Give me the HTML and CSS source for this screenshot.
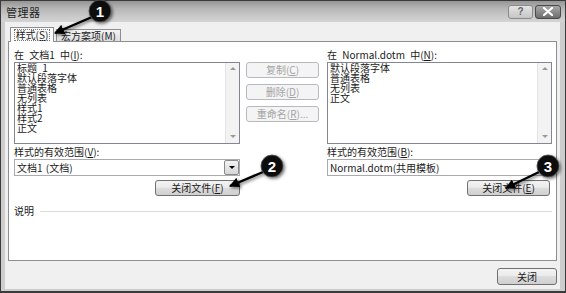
FILE: index.html
```html
<!DOCTYPE html>
<html lang="zh">
<head>
<meta charset="utf-8">
<title>管理器</title>
<link rel="stylesheet" href="styles.css">
</head>
<body>
<div class="window">
  <div class="titlebar">
    <span class="title">管理器</span>
    <div class="controls">
      <div class="ctl help">?</div>
      <div class="ctl close">
        <svg width="12" height="9" viewBox="0 0 12 9"><path d="M2 1 L10 8 M10 1 L2 8" stroke="#fff" stroke-width="2.2" stroke-linecap="round"/></svg>
      </div>
    </div>
  </div>
  <div class="client">
    <div class="tabs">
      <div class="tab active"><span class="focus">样式(<u>S</u>)</span></div>
      <div class="tab">宏方案项(<u>M</u>)</div>
    </div>
    <div class="panel">
      <div class="cols">
        <div class="col col-left">
          <div class="label">在 文档1 中(<u>I</u>):</div>
          <div class="listbox">
            <div class="items">
              <div>标题 1</div>
              <div>默认段落字体</div>
              <div>普通表格</div>
              <div>无列表</div>
              <div>样式1</div>
              <div>样式2</div>
              <div>正文</div>
            </div>
            <div class="scroll">
              <span class="arr up"></span>
              <span class="arr down"></span>
            </div>
          </div>
          <div class="label label2">样式的有效范围(<u>V</u>):</div>
          <div class="combo">
            <span class="combo-text">文档1 (文档)</span>
            <span class="drop"><span class="tri"></span></span>
          </div>
          <div class="btn close-file">关闭文件(<u>F</u>)</div>
        </div>
        <div class="col col-mid">
          <div class="btn disabled">复制(<u>C</u>)</div>
          <div class="btn disabled">删除(<u>D</u>)</div>
          <div class="btn disabled">重命名(<u>R</u>)...</div>
        </div>
        <div class="col col-right">
          <div class="label">在 Normal.dotm 中(<u>N</u>):</div>
          <div class="listbox">
            <div class="items">
              <div>默认段落字体</div>
              <div>普通表格</div>
              <div>无列表</div>
              <div>正文</div>
            </div>
            <div class="scroll">
              <span class="arr up"></span>
              <span class="arr down"></span>
            </div>
          </div>
          <div class="label label2">样式的有效范围(<u>B</u>):</div>
          <div class="combo">
            <span class="combo-text">Normal.dotm(共用模板)</span>
          </div>
          <div class="btn close-file right">关闭文件(<u>E</u>)</div>
        </div>
      </div>
      <div class="desc">
        <span class="desc-label">说明</span>
        <span class="rule"></span>
      </div>
    </div>
    <div class="footer">
      <div class="btn close-btn">关闭</div>
    </div>
  </div>
</div>
<svg class="callouts" width="566" height="293" viewBox="0 0 566 293">
  <defs>
    <filter id="ds" x="-50%" y="-50%" width="200%" height="200%">
      <feDropShadow dx="1.5" dy="1.5" stdDeviation="1.6" flood-color="#000" flood-opacity="0.55"/>
    </filter>
    <marker id="ah" viewBox="0 0 10 10" refX="9" refY="5" markerWidth="10" markerHeight="10" markerUnits="userSpaceOnUse" orient="auto">
      <path d="M0 0 L10 5 L0 10 Z" fill="#000"/>
    </marker>
  </defs>
  <g filter="url(#ds)">
    <line x1="92" y1="17" x2="55" y2="33" stroke="#000" stroke-width="2.4" marker-end="url(#ah)"/>
    <circle cx="100" cy="11" r="11" fill="#111" stroke="#555" stroke-width="0.8"/>
    <line x1="263" y1="172" x2="230" y2="186" stroke="#000" stroke-width="2.4" marker-end="url(#ah)"/>
    <circle cx="272" cy="166" r="11" fill="#111" stroke="#555" stroke-width="0.8"/>
    <line x1="539" y1="172" x2="506" y2="188" stroke="#000" stroke-width="2.4" marker-end="url(#ah)"/>
    <circle cx="548" cy="166" r="11" fill="#111" stroke="#555" stroke-width="0.8"/>
  </g>
  <text x="100" y="16.5" class="num">1</text>
  <text x="272" y="171.5" class="num">2</text>
  <text x="548" y="171.5" class="num">3</text>
</svg>
</body>
</html>
```

FILE: styles.css
```css
* { box-sizing: border-box; }
html, body { margin: 0; padding: 0; }
body {
  position: relative;
  width: 566px;
  height: 293px;
  overflow: hidden;
  background: #fff;
  font-family: "Noto Sans CJK SC", "Noto Sans", sans-serif;
  font-size: 10px;
  color: #1a1a1a;
  word-spacing: 3px;
}
u { text-decoration: underline; text-underline-offset: 1px; }

.window {
  width: 566px;
  height: 293px;
  border: 1px solid #3a3a3a;
  border-bottom-width: 2px;
  background: #cdcdcd;
  display: flex;
  flex-direction: column;
}
.titlebar {
  flex: none;
  height: 21px;
  display: flex;
  align-items: center;
  justify-content: space-between;
  padding: 0 4px 0 5px;
  background: linear-gradient(to bottom, #959595 0%, #b6b6b6 35%, #cacaca 75%, #d4d4d4 100%);
}
.title { font-size: 11px; color: #1e1e1e; letter-spacing: 0.5px; }
.controls { display: flex; gap: 2px; }
.ctl {
  height: 14px;
  border-radius: 3px;
  display: flex;
  align-items: center;
  justify-content: center;
}
.help {
  width: 25px;
  border: 1px solid #8a8a8a;
  background: linear-gradient(#e4e4e4, #c6c6c6);
  color: #666;
  font-family: "Liberation Sans", sans-serif;
  font-weight: bold;
  font-size: 10px;
}
.close {
  width: 26px;
  border: 1px solid #4a4a4a;
  background: linear-gradient(#a8a8a8, #6e6e6e);
}

.client {
  flex: 1;
  margin: 0 5px 2px 4px;
  padding: 5px 3px 0 3px;
  background: #f0f0f0;
  display: flex;
  flex-direction: column;
}
.tabs { display: flex; align-items: flex-end; margin-left: 2px; height: 14px; }
.tab {
  height: 12px;
  width: 65px;
  margin-left: 2px;
  border: 1px solid #8c8e94;
  border-bottom: none;
  background: linear-gradient(#f4f4f4, #dcdcdc);
  display: flex;
  align-items: center;
  justify-content: center;
  line-height: 10px;
  color: #222;
}
.tab.active {
  width: 44px;
  height: 15px;
  margin-left: 0;
  margin-bottom: -1px;
  background: #fbfbfb;
  position: relative;
  z-index: 1;
}
.focus { outline: 1px dotted #777; outline-offset: 0; padding: 0 1px; line-height: 10px; }

.panel {
  flex: none;
  height: 220px;
  border: 1px solid #8c8e94;
  background: #fff;
  padding: 7px 4px 0 5px;
}
.cols { display: flex; }
.col { display: flex; flex-direction: column; }
.col-left { width: 226px; }
.col-mid { width: 73px; margin: 0 8px 0 6px; padding-top: 13px; gap: 6px; }
.col-right { width: 225px; }
.label { height: 12px; line-height: 12px; white-space: nowrap; }
.label2 { margin-top: 2px; }

.listbox {
  margin-top: 1px;
  height: 82px;
  border: 1px solid #828790;
  display: flex;
  background: #fff;
}
.items { flex: 1; padding: 0 2px; line-height: 10px; }
.items div { height: 10px; white-space: nowrap; }
.scroll {
  width: 14px;
  background: #f3f3f3;
  border-left: 1px solid #e4e4e4;
  display: flex;
  flex-direction: column;
  justify-content: space-between;
  align-items: center;
  padding: 4px 0 5px;
}
.arr { width: 0; height: 0; border-left: 3px solid transparent; border-right: 3px solid transparent; }
.arr.up { border-bottom: 3px solid #9a9a9a; }
.arr.down { border-top: 3px solid #9a9a9a; }

.combo {
  margin-top: 1px;
  height: 17px;
  border: 1px solid #a9abb0;
  background: #fff;
  display: flex;
  align-items: center;
}
.combo-text { flex: 1; padding-left: 2px; white-space: nowrap; word-spacing: 1px; }
.drop {
  width: 15px;
  height: 15px;
  border: 1px solid #8a8a8a;
  border-radius: 2px;
  background: linear-gradient(#f3f3f3, #d6d6d6);
  display: flex;
  align-items: center;
  justify-content: center;
}
.tri { width: 0; height: 0; border-left: 3px solid transparent; border-right: 3px solid transparent; border-top: 3px solid #000; }

.btn {
  height: 16px;
  border: 1px solid #707070;
  border-radius: 3px;
  background: linear-gradient(#f3f3f3 0%, #ebebeb 45%, #dddddd 50%, #cfcfcf 100%);
  display: flex;
  align-items: center;
  justify-content: center;
  white-space: nowrap;
  color: #1a1a1a;
  line-height: 10px;
}
.btn.disabled {
  border-color: #b6b9bd;
  background: #f4f4f4;
  color: #a4a4a4;
}
.close-file { margin-top: 4px; width: 85px; align-self: flex-end; }
.close-file.right { width: 83px; margin-right: 2px; }

.desc { margin-top: 9px; display: flex; align-items: center; height: 12px; }
.desc-label { line-height: 12px; }
.rule { flex: 1; height: 1px; background: #dcdcdc; margin-left: 6px; }

.footer { display: flex; justify-content: flex-end; padding-top: 7px; }
.close-btn { width: 60px; height: 17px; }

.callouts { position: absolute; left: 0; top: 0; pointer-events: none; }
.num {
  fill: #fff;
  font-family: "Liberation Sans", sans-serif;
  font-weight: bold;
  font-size: 15px;
  text-anchor: middle;
}
```
